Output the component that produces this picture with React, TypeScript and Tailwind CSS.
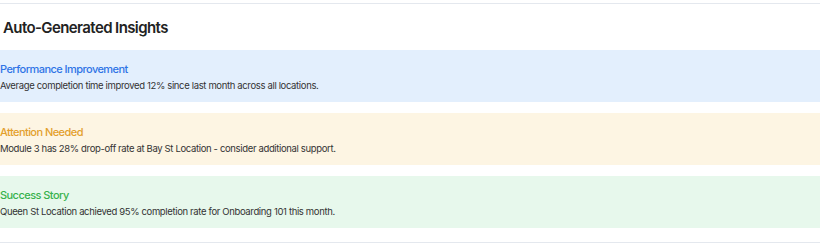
const insights = [
  {
    title: "Performance Improvement",
    text: "Average completion time improved 12% since last month across all locations.",
    box: "bg-[#e3effd]",
    head: "text-[#2f74e6]",
  },
  {
    title: "Attention Needed",
    text: "Module 3 has 28% drop-off rate at Bay St Location - consider additional support.",
    box: "bg-[#fdf5e3]",
    head: "text-[#e3a02c]",
  },
  {
    title: "Success Story",
    text: "Queen St Location achieved 95% completion rate for Onboarding 101 this month.",
    box: "bg-[#e7f8ec]",
    head: "text-[#37b24d]",
  },
];

export default function App() {
  return (
    <div className="w-[820px] h-[250px] overflow-hidden bg-white font-['Inter',sans-serif]">
      <div className="mt-[3px] -ml-[12px] w-[860px] border-y border-[#e4e8ee] pb-[14px]">
        <h2 className="pl-[15px] pt-[14px] pb-[12px] text-[15px] leading-[20px] font-semibold tracking-[-0.6px] text-[#222]">
          Auto-Generated Insights
        </h2>
        <div className="flex flex-col gap-[11px]">
          {insights.map((i) => (
            <div key={i.title} className={`${i.box} h-[52px] px-3 pt-[12px]`}>
              <div className={`${i.head} text-[11px] leading-[14px] font-medium tracking-[-0.55px]`}>{i.title}</div>
              <div className="mt-[3px] text-[9.5px] leading-[14px] tracking-[-0.35px] text-[#333]">{i.text}</div>
            </div>
          ))}
        </div>
      </div>
    </div>
  );
}
